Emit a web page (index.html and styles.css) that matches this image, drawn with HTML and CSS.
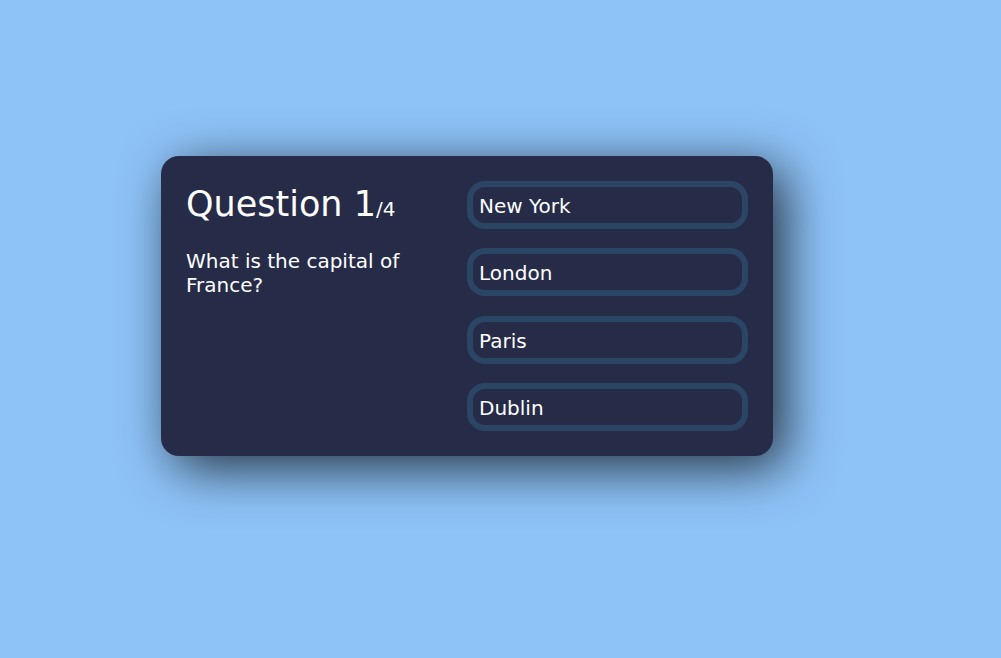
FILE: index.html
```html
<!DOCTYPE html>
<html lang="en">
<head>
<meta charset="utf-8">
<title>Quiz</title>
<link rel="stylesheet" href="styles.css">
</head>
<body>
<div class="app">
  <div class="question-section">
    <div class="question-count"><span>Question 1</span>/4</div>
    <div class="question-text">What is the capital of France?</div>
  </div>
  <div class="answer-section">
    <button class="answer">New York</button>
    <button class="answer">London</button>
    <button class="answer">Paris</button>
    <button class="answer">Dublin</button>
  </div>
</div>
</body>
</html>
```

FILE: styles.css
```css
html, body {
  margin: 0;
  height: 100%;
}
body {
  background-color: #8ec3f8;
  font-family: "DejaVu Sans", Verdana, sans-serif;
  color: #ffffff;
  display: flex;
  align-items: flex-start;
  justify-content: flex-start;
  padding: 156px 0 0 161px;
  box-sizing: border-box;
}
.app {
  background-color: #262c48;
  width: 562px;
  min-height: 250px;
  border-radius: 18px;
  padding: 25px;
  box-shadow: 12px 12px 52px 0 rgba(0, 0, 0, 0.75);
  display: flex;
  justify-content: space-evenly;
}
.question-section {
  width: 100%;
  padding-top: 3px;
}
.question-count {
  font-size: 20px;
  margin-bottom: 25px;
}
.question-count span {
  font-size: 35px;
}
.question-text {
  font-size: 20px;
  margin-bottom: 15px;
}
.answer-section {
  width: 100%;
  display: flex;
  flex-direction: column;
  justify-content: space-between;
}
.answer {
  width: 100%;
  font-family: "DejaVu Sans", Verdana, sans-serif;
  font-size: 20px;
  color: #ffffff;
  background-color: #262c48;
  border-radius: 18px;
  display: flex;
  padding: 7px 6px 5px;
  justify-content: flex-start;
  align-items: center;
  border: 6px solid #2b4565;
  text-align: left;
  line-height: normal;
}
```
